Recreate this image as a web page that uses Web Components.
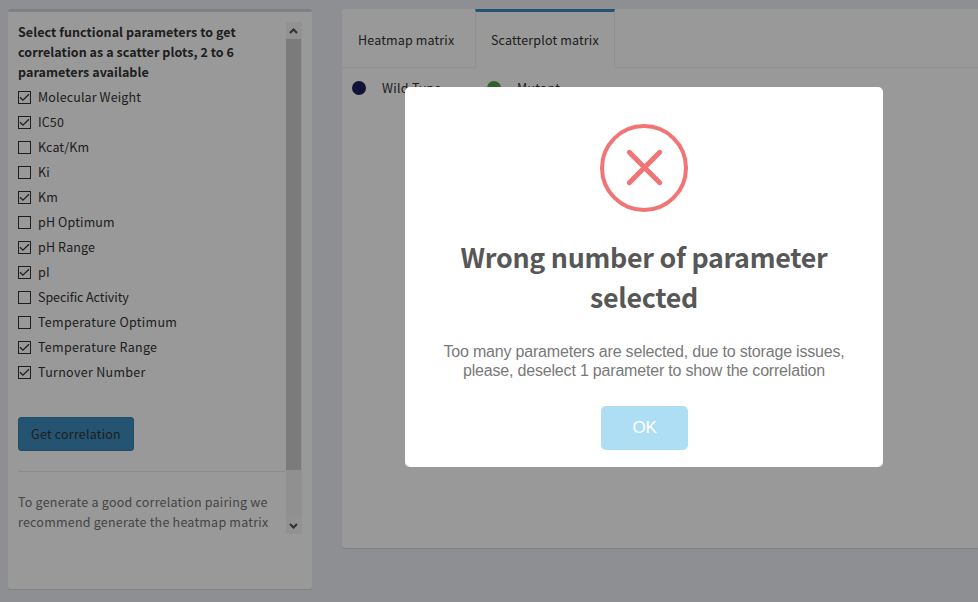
<!DOCTYPE html>
<html lang="en">
<head>
<meta charset="utf-8">
<title>Scatterplot matrix</title>
<style>
html,body{margin:0;height:100%;overflow:hidden}
body{font:12.5px/20px "Noto Sans CJK SC","Noto Sans",sans-serif;color:#333;background:#edeef5}
</style>
</head>
<body>
<correlation-page></correlation-page>
<script>
const define = (name, html, init) => customElements.define(name, class extends HTMLElement {
  constructor(){
    super();
    const t = document.createElement('template');
    t.innerHTML = html;
    this.attachShadow({mode:'open'}).append(t.content.cloneNode(true));
    if (init) init(this, this.shadowRoot);
  }
});

define('param-check', `
<style>
:host{display:flex;align-items:center;height:25px;gap:7px;white-space:nowrap;letter-spacing:var(--ls,.3px)}
svg{width:13px;height:13px;flex:none}
span{padding-bottom:2px}
path{display:none}
:host([checked]) path{display:block}
</style>
<svg viewBox="0 0 13 13" fill="none" stroke="#333"><rect x=".5" y=".5" width="12" height="12"/><path d="M2 6.3 4.9 9.2 11 3.2" stroke-width="1.3"/></svg>
<span><slot></slot></span>`);

define('scroll-track', `
<style>
:host{display:flex;flex-direction:column;width:16px;height:512px;background:#f1f1f1}
svg{width:16px;height:17px;flex:none;background:#f4f4f4}
.thumb{height:431px;width:15px;background:#cdcdcd}
.rest{flex:1}
</style>
<svg viewBox="0 0 16 17" fill="none" stroke="#505050" stroke-width="2"><path d="M4 11 7.5 7.5 11 11"/></svg>
<div class="thumb"></div><div class="rest"></div>
<svg viewBox="0 0 16 17" fill="none" stroke="#505050" stroke-width="2"><path d="M4 7 7.5 10.5 11 7"/></svg>`);

define('filter-panel', `
<style>
:host{display:flex;box-sizing:border-box;width:304px;height:580px;padding:10px;background:#fff;border-top:3px solid #d2d6de;border-radius:3px;box-shadow:0 1px 1px rgba(0,0,0,.1)}
.body{width:268px;height:512px;overflow:hidden;white-space:nowrap}
b{display:block;height:63px;letter-spacing:.06px}
button{display:block;font:inherit;box-sizing:border-box;width:116px;height:34px;margin:32px 0 20px;padding:0;border:1px solid #367fa9;border-radius:3px;background:#3c8dbc;color:#333;letter-spacing:.2px}
hr{border:0;border-top:1px solid #e8e8e8;margin:0 1px 20px 0}
p{margin:0;color:#737373;letter-spacing:.22px}
</style>
<div class="body">
<b>Select functional parameters to get<br>correlation as a scatter plots, 2 to 6<br>parameters available</b>
<param-check checked style="--ls:.12px">Molecular Weight</param-check>
<param-check checked style="--ls:.1px">IC50</param-check>
<param-check style="--ls:.1px">Kcat/Km</param-check>
<param-check style="--ls:.1px">Ki</param-check>
<param-check checked style="--ls:.1px">Km</param-check>
<param-check style="--ls:.15px">pH Optimum</param-check>
<param-check checked style="--ls:.15px">pH Range</param-check>
<param-check checked>pI</param-check>
<param-check style="--ls:-.06px">Specific Activity</param-check>
<param-check>Temperature Optimum</param-check>
<param-check checked>Temperature Range</param-check>
<param-check checked>Turnover Number</param-check>
<button>Get correlation</button>
<hr>
<p>To generate a good correlation pairing we<br>recommend generate the heatmap matrix</p>
</div>
<scroll-track></scroll-track>`);

define('legend-item', `
<style>
:host{display:flex;align-items:center;width:135px;gap:16px;letter-spacing:.3px}
i{width:14px;height:14px;border-radius:50%;background:var(--dot)}
</style>
<i></i><span><slot></slot></span>`);

define('matrix-panel', `
<style>
:host{display:block;flex:1;height:539px;background:#fff;border-radius:3px 0 0 3px;box-shadow:0 1px 1px rgba(0,0,0,.1);letter-spacing:.15px;white-space:nowrap}
nav{display:flex;height:59px;box-sizing:border-box}
nav div{box-sizing:border-box;border-bottom:1px solid #f0f0f0;padding:21px 0 0 16px;width:133px}
nav .on{width:140px;border:1px solid #f0f0f0;border-top:3px solid #3c8dbc;border-bottom:0;padding:18px 0 0 15px}
nav .fill{flex:1}
section{display:flex;padding:10px}
</style>
<nav><div>Heatmap matrix</div><div class="on">Scatterplot matrix</div><div class="fill"></div></nav>
<section><legend-item style="--dot:#1b2060">Wild Type</legend-item><legend-item style="--dot:#4ba446">Mutant</legend-item></section>`);

define('alert-dialog', `
<style>
:host{position:fixed;inset:0;background:rgba(0,0,0,.4)}
.box{position:absolute;left:405px;top:87px;width:478px;height:380px;box-sizing:border-box;padding-top:37px;background:#fff;border-radius:5px;display:flex;flex-direction:column;align-items:center;text-align:center;white-space:nowrap}
svg{width:88px;height:88px;flex:none}
h2{margin:25px 0 0;font-size:26.8px;line-height:40px;font-weight:600;color:#575757;letter-spacing:-.28px}
p{margin:25px 0 0;font:16px/19px "Liberation Sans",Arial,sans-serif;color:#797979;letter-spacing:-.19px}
button{margin-top:26px;width:87px;height:44px;padding:0 0 0 1px;border:0;border-radius:5px;background:#aedef4;color:#fff;font:17px "Liberation Sans",Arial,sans-serif;letter-spacing:-.3px}
</style>
<div class="box">
<svg viewBox="0 0 88 88" fill="none" stroke="#f27474"><circle cx="44" cy="44" r="42" stroke-width="4"/><path d="M29.3 28.3 59.7 58.7M59.7 28.3 29.3 58.7" stroke-width="5" stroke-linecap="round"/></svg>
<h2>Wrong number of parameter<br>selected</h2>
<p>Too many parameters are selected, due to storage issues,<br>please, deselect 1 parameter to show the correlation</p>
<button>OK</button>
</div>`);

define('correlation-page', `
<style>
:host{display:flex;gap:30px;align-items:flex-start;padding:9px 0 0 8px}
</style>
<filter-panel></filter-panel>
<matrix-panel></matrix-panel>
<alert-dialog></alert-dialog>`);
</script>
</body>
</html>
